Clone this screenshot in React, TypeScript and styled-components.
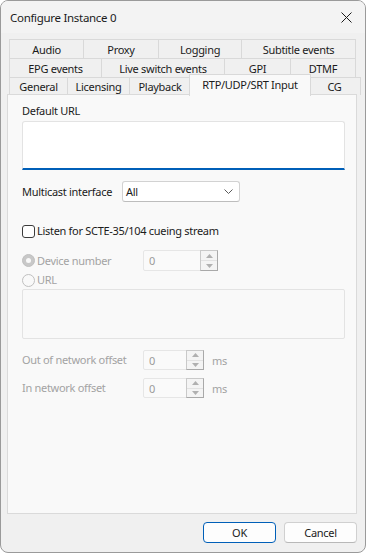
import styled, { createGlobalStyle } from "styled-components";

const GlobalStyle = createGlobalStyle`
  html, body {
    margin: 0;
    padding: 0;
    background: #ffffff;
  }
  * {
    box-sizing: border-box;
  }
`;

const font = `"Noto Sans", "Open Sans", "Liberation Sans", sans-serif`;

const Window = styled.div`
  width: 366px;
  height: 553px;
  display: flex;
  flex-direction: column;
  border: 1px solid #9a9a9a;
  border-radius: 8px;
  overflow: hidden;
  background: #f0f0f0;
  font-family: ${font};
  font-size: 11px;
  letter-spacing: -0.3px;
  color: #1b1b1b;
`;

const TitleBar = styled.div`
  height: 32px;
  flex: none;
  display: flex;
  align-items: center;
  justify-content: space-between;
  padding: 0 9px 0 9px;
  background: #f3f3f3;
  font-size: 11.5px;
`;

const CloseButton = styled.div`
  width: 14px;
  height: 14px;
  display: flex;
  align-items: center;
  justify-content: center;
  margin-right: 3px;
`;

const Body = styled.div`
  flex: 1;
  display: flex;
  flex-direction: column;
  padding: 6px 8px 9px 6px;
`;

const TabRows = styled.div`
  display: flex;
  flex-direction: column;
  padding: 0 1px 0 2px;
`;

const TabRow = styled.div<{ $h: number }>`
  display: flex;
  height: ${({ $h }) => $h}px;
`;

const Tab = styled.div<{ $w: number; $active?: boolean }>`
  width: ${({ $w }) => $w}px;
  flex: none;
  display: flex;
  align-items: center;
  justify-content: center;
  border: 1px solid #d9d9d9;
  border-bottom: none;
  margin-left: -1px;
  background: #f0f0f0;
  white-space: nowrap;

  &:first-child {
    margin-left: 0;
  }

  ${({ $active }) =>
    $active &&
    `
    position: relative;
    z-index: 2;
    height: 22px;
    margin-top: -3px;
    margin-left: -2px;
    margin-right: -2px;
    width: auto;
    padding-bottom: 3px;
    background: #f9f9f9;
  `}
`;

const ActiveTabText = styled.span<{ $w: number }>`
  display: flex;
  justify-content: center;
  width: ${({ $w }) => $w + 3}px;
`;

const Panel = styled.div`
  flex: 1;
  display: flex;
  flex-direction: column;
  background: #f9f9f9;
  border: 1px solid #dadada;
  margin-top: -1px;
  position: relative;
  z-index: 1;
  padding: 8px 11px 0 14px;
`;

const Label = styled.div<{ $disabled?: boolean }>`
  height: 16px;
  line-height: 16px;
  color: ${({ $disabled }) => ($disabled ? "#a3a3a3" : "#1b1b1b")};
  white-space: nowrap;
`;

const UrlField = styled.div`
  height: 49px;
  margin-top: 2px;
  background: #ffffff;
  border: 1px solid #e3e3e3;
  border-bottom: 2px solid #005fb8;
  border-radius: 3px 3px 0 0;
`;

const Row = styled.div<{ $mt: number }>`
  display: flex;
  align-items: center;
  margin-top: ${({ $mt }) => $mt}px;
`;

const FieldLabel = styled(Label)<{ $w: number }>`
  width: ${({ $w }) => $w}px;
  flex: none;
`;

const Select = styled.div`
  width: 118px;
  height: 21px;
  display: flex;
  align-items: center;
  justify-content: space-between;
  padding: 0 6px 0 3px;
  background: #ffffff;
  border: 1px solid #d2d2d2;
  border-bottom-color: #bdbdbd;
  border-radius: 3px;
`;

const CheckBox = styled.div`
  width: 13px;
  height: 13px;
  flex: none;
  border: 1px solid #3c3c3c;
  border-radius: 3px;
  background: #ffffff;
  margin-right: 2px;
`;

const Radio = styled.div<{ $checked?: boolean }>`
  width: 13px;
  height: 13px;
  flex: none;
  border-radius: 50%;
  margin-right: 2px;
  display: flex;
  align-items: center;
  justify-content: center;
  border: 1px solid #c0c0c0;
  background: ${({ $checked }) => ($checked ? "#c8c8c8" : "#f9f9f9")};

  &::after {
    content: "";
    display: ${({ $checked }) => ($checked ? "block" : "none")};
    width: 5px;
    height: 5px;
    border-radius: 50%;
    background: #f9f9f9;
  }
`;

const RadioLabel = styled.div<{ $w: number }>`
  width: ${({ $w }) => $w}px;
  flex: none;
  display: flex;
  align-items: center;
`;

const Spin = styled.div<{ $w: number; $h: number }>`
  width: ${({ $w }) => $w}px;
  height: ${({ $h }) => $h}px;
  flex: none;
  display: flex;
  background: #fafafa;
  border: 1px solid #e6e6e6;
  border-radius: 2px;
`;

const SpinValue = styled.div`
  flex: 1;
  display: flex;
  align-items: center;
  padding-left: 5px;
  color: #9a9a9a;
`;

const SpinButtons = styled.div`
  width: 18px;
  flex: none;
  display: flex;
  flex-direction: column;
  margin: -1px -1px -1px 0;
  border: 1px solid #c9c9c9;
  border-right-color: #a9a9a9;
  border-bottom-color: #a9a9a9;
  background: #f4f4f4;
`;

const SpinHalf = styled.div<{ $down?: boolean }>`
  flex: 1;
  display: flex;
  align-items: center;
  justify-content: center;
  border-top: ${({ $down }) => ($down ? "1px solid #e2e2e2" : "none")};
`;

const Unit = styled.div`
  margin-left: 8px;
  color: #a3a3a3;
`;

const UrlArea = styled.div`
  height: 50px;
  margin-top: 1px;
  background: #f9f9f9;
  border: 1px solid #e3e3e3;
  border-radius: 2px;
`;

const Footer = styled.div`
  display: flex;
  justify-content: flex-end;
  gap: 8px;
  margin-top: 8px;
`;

const Button = styled.div<{ $primary?: boolean }>`
  width: 73px;
  height: 21px;
  display: flex;
  align-items: center;
  justify-content: center;
  background: #fdfdfd;
  border: 1px solid ${({ $primary }) => ($primary ? "#005fb8" : "#d0d0d0")};
  border-bottom-color: ${({ $primary }) => ($primary ? "#005fb8" : "#b8b8b8")};
  border-radius: 4px;
`;

type TabDef = { label: string; w: number; active?: boolean };

const tabRows: { h: number; tabs: TabDef[] }[] = [
  {
    h: 19,
    tabs: [
      { label: "Audio", w: 75 },
      { label: "Proxy", w: 76 },
      { label: "Logging", w: 84 },
      { label: "Subtitle events", w: 115 },
    ],
  },
  {
    h: 19,
    tabs: [
      { label: "EPG events", w: 93 },
      { label: "Live switch events", w: 124 },
      { label: "GPI", w: 67 },
      { label: "DTMF", w: 66 },
    ],
  },
  {
    h: 18,
    tabs: [
      { label: "General", w: 59 },
      { label: "Licensing", w: 63 },
      { label: "Playback", w: 62 },
      { label: "RTP/UDP/SRT Input", w: 117, active: true },
      { label: "CG", w: 53 },
    ],
  },
];

function Arrow({ down }: { down?: boolean }) {
  return (
    <svg width="7" height="4" viewBox="0 0 7 4">
      <path d={down ? "M0 0h7L3.5 4z" : "M3.5 0L7 4H0z"} fill="#b0b0b0" />
    </svg>
  );
}

function SpinBox({ w, h }: { w: number; h: number }) {
  return (
    <Spin $w={w} $h={h}>
      <SpinValue>0</SpinValue>
      <SpinButtons>
        <SpinHalf>
          <Arrow />
        </SpinHalf>
        <SpinHalf $down>
          <Arrow down />
        </SpinHalf>
      </SpinButtons>
    </Spin>
  );
}

export default function App() {
  return (
    <>
      <GlobalStyle />
      <Window>
        <TitleBar>
          <span>Configure Instance 0</span>
          <CloseButton>
            <svg width="11" height="11" viewBox="0 0 11 11">
              <path d="M0.5 0.5l10 10M10.5 0.5l-10 10" stroke="#1b1b1b" strokeWidth="1" />
            </svg>
          </CloseButton>
        </TitleBar>
        <Body>
          <TabRows>
            {tabRows.map((row, i) => (
              <TabRow key={i} $h={row.h}>
                {row.tabs.map((t) =>
                  t.active ? (
                    <Tab key={t.label} $w={t.w} $active>
                      <ActiveTabText $w={t.w}>{t.label}</ActiveTabText>
                    </Tab>
                  ) : (
                    <Tab key={t.label} $w={t.w}>
                      {t.label}
                    </Tab>
                  )
                )}
              </TabRow>
            ))}
          </TabRows>
          <Panel>
            <Label>Default URL</Label>
            <UrlField />
            <Row $mt={11}>
              <FieldLabel $w={100}>Multicast interface</FieldLabel>
              <Select>
                <span>All</span>
                <svg width="9" height="5" viewBox="0 0 9 5">
                  <path d="M0.5 0.5l4 4 4-4" stroke="#5a5a5a" fill="none" strokeWidth="1" />
                </svg>
              </Select>
            </Row>
            <Row $mt={21}>
              <CheckBox />
              <Label>Listen for SCTE-35/104 cueing stream</Label>
            </Row>
            <Row $mt={11}>
              <RadioLabel $w={121}>
                <Radio $checked />
                <Label $disabled>Device number</Label>
              </RadioLabel>
              <SpinBox w={75} h={21} />
            </Row>
            <Row $mt={1}>
              <Radio />
              <Label $disabled>URL</Label>
            </Row>
            <UrlArea />
            <Row $mt={11}>
              <FieldLabel $w={121} $disabled>
                Out of network offset
              </FieldLabel>
              <SpinBox w={61} h={20} />
              <Unit>ms</Unit>
            </Row>
            <Row $mt={8}>
              <FieldLabel $w={121} $disabled>
                In network offset
              </FieldLabel>
              <SpinBox w={61} h={20} />
              <Unit>ms</Unit>
            </Row>
          </Panel>
          <Footer>
            <Button $primary>OK</Button>
            <Button>Cancel</Button>
          </Footer>
        </Body>
      </Window>
    </>
  );
}
